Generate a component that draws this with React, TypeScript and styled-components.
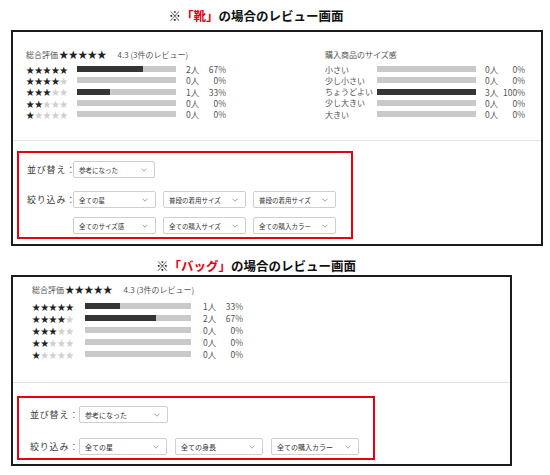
import React from 'react';
import styled, { createGlobalStyle } from 'styled-components';

const GlobalStyle = createGlobalStyle`
  html, body {
    margin: 0;
    padding: 0;
    background: #fff;
  }
  body {
    font-family: "Noto Sans CJK JP", "Noto Sans", sans-serif;
    color: #333;
  }
`;

const Page = styled.div`
  width: 550px;
  height: 475px;
  overflow: hidden;
  display: flex;
  flex-direction: column;
`;

const Title = styled.h2<{ $mt: number; $mb: number }>`
  margin: ${p => p.$mt}px 0 ${p => p.$mb}px;
  padding-right: 38px;
  height: 18px;
  line-height: 18px;
  font-size: 12.5px;
  font-weight: 700;
  color: #111;
  text-align: center;
`;

const Red = styled.span`
  color: #e60012;
`;

const Frame = styled.section<{ $w: number }>`
  margin-left: 11px;
  width: ${p => p.$w}px;
  box-sizing: border-box;
  border: 2px solid #1c1c1c;
  background: #fff;
`;

const Summary = styled.div<{ $pt: number; $pl: number; $pb: number }>`
  display: flex;
  padding: ${p => p.$pt}px 0 ${p => p.$pb}px ${p => p.$pl}px;
  font-size: 8px;
  color: #555;
`;

const Block = styled.div<{ $w?: number }>`
  width: ${p => (p.$w ? `${p.$w}px` : 'auto')};
  display: flex;
  flex-direction: column;
`;

const Header = styled.div<{ $h: number; $mb: number }>`
  display: flex;
  align-items: center;
  height: ${p => p.$h}px;
  margin-bottom: ${p => p.$mb}px;
  white-space: nowrap;
`;

const HeaderStars = styled.span`
  font-size: 9.5px;
  line-height: 1;
  color: #222;
  margin: 0 11px 0 1px;
`;

const Row = styled.div<{ $h: number; $label: number; $bar: number; $gap: number }>`
  display: grid;
  grid-template-columns: ${p => p.$label}px ${p => p.$bar}px ${p => p.$gap}px 16px 24px;
  align-items: center;
  height: ${p => p.$h}px;
  font-size: 8px;
  white-space: nowrap;
`;

const Stars = styled.span`
  font-size: 8.4px;
  line-height: 1;
`;

const Star = styled.span<{ $on: boolean }>`
  color: ${p => (p.$on ? '#222' : '#cfcfcf')};
`;

const Bar = styled.div`
  height: 6px;
  background: #c9c9c9;
`;

const Fill = styled.div`
  height: 100%;
  background: #353535;
`;

const Count = styled.span`
  grid-column: 4;
  font-size: 8.5px;
`;

const Pct = styled.span`
  font-size: 8.5px;
  text-align: right;
`;

const FilterArea = styled.div<{ $pt: number; $pb: number }>`
  border-top: 1px solid #e4e4e4;
  padding: ${p => p.$pt}px 4px ${p => p.$pb}px;
`;

const RedBox = styled.div<{ $w: number; $pt: number; $pl: number; $pb: number; $gap: number }>`
  width: ${p => p.$w}px;
  box-sizing: border-box;
  border: 2px solid #e60012;
  padding: ${p => p.$pt}px 0 ${p => p.$pb}px ${p => p.$pl}px;
  display: flex;
  flex-direction: column;
  gap: ${p => p.$gap}px;
`;

const FilterRow = styled.div<{ $label: number }>`
  display: grid;
  grid-template-columns: ${p => p.$label}px auto;
  align-items: start;
`;

const Label = styled.span`
  height: 17px;
  line-height: 18px;
  font-size: 9px;
  letter-spacing: 0.8px;
  color: #3a3a3a;
  white-space: nowrap;
`;

const SelectGrid = styled.div<{ $cols: number; $w: number; $cgap: number; $rgap: number }>`
  display: grid;
  grid-template-columns: repeat(${p => p.$cols}, ${p => p.$w}px);
  column-gap: ${p => p.$cgap}px;
  row-gap: ${p => p.$rgap}px;
`;

const Select = styled.div<{ $w?: number; $fs: number }>`
  ${p => (p.$w ? `width: ${p.$w}px;` : '')}
  height: 17px;
  box-sizing: border-box;
  border: 1px solid #cfcfcf;
  border-radius: 2px;
  padding: 0 7px 0 5px;
  display: flex;
  align-items: center;
  justify-content: space-between;
  font-size: ${p => p.$fs}px;
  color: #333;
  white-space: nowrap;
  background: #fff;
`;

const Chevron = () => (
  <svg width="6" height="4" viewBox="0 0 6 4">
    <polyline points="0.5,0.7 3,3.2 5.5,0.7" fill="none" stroke="#888" strokeWidth="0.8" />
  </svg>
);

type Dist = { count: number; pct: number };

const StarRow: React.FC<{ n: number; d: Dist; h: number; label: number; bar: number; gap: number }> = ({ n, d, h, label, bar, gap }) => (
  <Row $h={h} $label={label} $bar={bar} $gap={gap}>
    <Stars>
      {[0, 1, 2, 3, 4].map(i => (
        <Star key={i} $on={i < n}>★</Star>
      ))}
    </Stars>
    <Bar>
      <Fill style={{ width: `${d.pct}%` }} />
    </Bar>
    <Count>{d.count}人</Count>
    <Pct>{d.pct}%</Pct>
  </Row>
);

const shoeSizes: { label: string; d: Dist }[] = [
  { label: '小さい', d: { count: 0, pct: 0 } },
  { label: '少し小さい', d: { count: 0, pct: 0 } },
  { label: 'ちょうどよい', d: { count: 3, pct: 100 } },
  { label: '少し大きい', d: { count: 0, pct: 0 } },
  { label: '大きい', d: { count: 0, pct: 0 } },
];

const shoeStars: Dist[] = [
  { count: 2, pct: 67 },
  { count: 0, pct: 0 },
  { count: 1, pct: 33 },
  { count: 0, pct: 0 },
  { count: 0, pct: 0 },
];

const bagStars: Dist[] = [
  { count: 1, pct: 33 },
  { count: 2, pct: 67 },
  { count: 0, pct: 0 },
  { count: 0, pct: 0 },
  { count: 0, pct: 0 },
];

const App: React.FC = () => {
  return (
    <Page>
      <GlobalStyle />
      <Title $mt={7} $mb={5}>
        ※<Red>「靴」</Red>の場合のレビュー画面
      </Title>
      <Frame $w={532}>
        <Summary $pt={17} $pl={13} $pb={21}>
          <Block $w={299}>
            <Header $h={11} $mb={3}>
              総合評価<HeaderStars>★★★★★</HeaderStars>4.3 (3件のレビュー)
            </Header>
            {shoeStars.map((d, i) => (
              <StarRow key={i} n={5 - i} d={d} h={11.25} label={51} bar={99} gap={10} />
            ))}
          </Block>
          <Block>
            <Header $h={11} $mb={3}>購入商品のサイズ感</Header>
            {shoeSizes.map(s => (
              <Row key={s.label} $h={11.25} $label={52} $bar={99} $gap={9}>
                <span>{s.label}</span>
                <Bar>
                  <Fill style={{ width: `${s.d.pct}%` }} />
                </Bar>
                <Count>{s.d.count}人</Count>
                <Pct>{s.d.pct}%</Pct>
              </Row>
            ))}
          </Block>
        </Summary>
        <FilterArea $pt={10} $pb={5}>
          <RedBox $w={336} $pt={8} $pl={8} $pb={3} $gap={13}>
            <FilterRow $label={46}>
              <Label>並び替え：</Label>
              <Select $w={82} $fs={6.5}>
                参考になった
                <Chevron />
              </Select>
            </FilterRow>
            <FilterRow $label={46}>
              <Label>絞り込み：</Label>
              <SelectGrid $cols={3} $w={83} $cgap={7} $rgap={9}>
                {['全ての星', '普段の着用サイズ', '普段の着用サイズ', '全てのサイズ感', '全ての購入サイズ', '全ての購入カラー'].map(
                  (t, i) => (
                    <Select key={i} $fs={6.5}>
                      {t}
                      <Chevron />
                    </Select>
                  )
                )}
              </SelectGrid>
            </FilterRow>
          </RedBox>
        </FilterArea>
      </Frame>

      <Title $mt={11} $mb={0}>
        ※<Red>「バッグ」</Red>の場合のレビュー画面
      </Title>
      <Frame $w={501}>
        <Summary $pt={6} $pl={19} $pb={22}>
          <Block>
            <Header $h={12} $mb={5}>
              総合評価<HeaderStars>★★★★★</HeaderStars>4.3 (3件のレビュー)
            </Header>
            {bagStars.map((d, i) => (
              <StarRow key={i} n={5 - i} d={d} h={12} label={53} bar={106} gap={12} />
            ))}
          </Block>
        </Summary>
        <FilterArea $pt={13} $pb={4}>
          <RedBox $w={358} $pt={8} $pl={11} $pb={3} $gap={15}>
            <FilterRow $label={49}>
              <Label>並び替え：</Label>
              <Select $w={89} $fs={7}>
                参考になった
                <Chevron />
              </Select>
            </FilterRow>
            <FilterRow $label={49}>
              <Label>絞り込み：</Label>
              <SelectGrid $cols={3} $w={88} $cgap={8} $rgap={0}>
                {['全ての星', '全ての身長', '全ての購入カラー'].map((t, i) => (
                  <Select key={i} $fs={7}>
                    {t}
                    <Chevron />
                  </Select>
                ))}
              </SelectGrid>
            </FilterRow>
          </RedBox>
        </FilterArea>
      </Frame>
    </Page>
  );
};

export default App;
